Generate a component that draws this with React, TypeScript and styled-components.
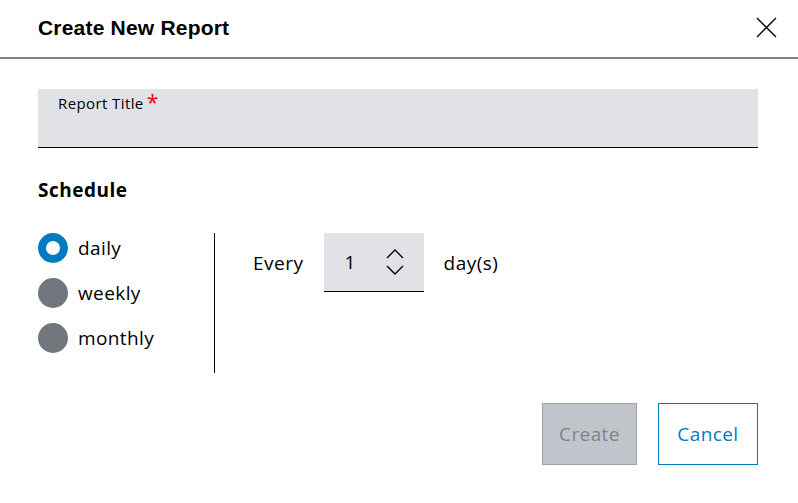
import React, { useState } from "react";
import styled, { createGlobalStyle } from "styled-components";

const GlobalStyle = createGlobalStyle`
  html, body {
    margin: 0;
    padding: 0;
    background: #ffffff;
  }
  body {
    font-family: "Open Sans", "Noto Sans", sans-serif;
    color: #000000;
  }
`;

const Dialog = styled.div`
  width: 798px;
  height: 503px;
  display: flex;
  flex-direction: column;
  box-sizing: border-box;
`;

const Header = styled.div`
  height: 55px;
  display: flex;
  align-items: center;
  justify-content: space-between;
  padding: 0 20px 2px 38px;
  border-bottom: 2px solid #7d8389;
`;

const Title = styled.h1`
  margin: 0;
  font-family: "Liberation Sans", Arial, sans-serif;
  font-size: 21px;
  font-weight: 700;
  letter-spacing: 0.2px;
`;

const CloseButton = styled.button`
  width: 24px;
  height: 24px;
  padding: 0;
  border: none;
  background: none;
  display: flex;
  align-items: center;
  justify-content: center;
`;

const Body = styled.div`
  display: flex;
  flex-direction: column;
  padding: 30px 40px 0 38px;
`;

const Field = styled.div`
  height: 59px;
  background: #e0e2e5;
  border-bottom: 1px solid #000000;
  padding: 4px 20px 0;
  box-sizing: border-box;
  font-size: 15px;
  letter-spacing: 0.4px;
`;

const Required = styled.span`
  color: #ed0007;
  font-size: 21px;
  line-height: 0;
  margin-left: 3px;
  position: relative;
  top: 1px;
`;

const SectionTitle = styled.h2`
  margin: 29px 0 0;
  font-size: 19px;
  font-weight: 700;
  letter-spacing: 0.5px;
`;

const Schedule = styled.div`
  display: flex;
  margin-top: 30px;
`;

const RadioList = styled.div`
  width: 176px;
  display: flex;
  flex-direction: column;
  gap: 15px;
`;

const RadioRow = styled.label`
  display: flex;
  align-items: center;
  gap: 10px;
  height: 30px;
  font-size: 19px;
  letter-spacing: 0.4px;
  cursor: pointer;
`;

const RadioDot = styled.span<{ $checked: boolean }>`
  width: 30px;
  height: 30px;
  border-radius: 50%;
  box-sizing: border-box;
  background: ${(p) => (p.$checked ? "#ffffff" : "#71767c")};
  border: ${(p) => (p.$checked ? "8.5px solid #007bc0" : "none")};
`;

const Divider = styled.div`
  width: 1px;
  height: 140px;
  background: #000000;
`;

const Interval = styled.div`
  display: flex;
  align-items: flex-start;
  padding-left: 38px;
  font-size: 19px;
  letter-spacing: 0.5px;
`;

const IntervalText = styled.span`
  height: 59px;
  display: flex;
  align-items: center;
`;

const NumberBox = styled.div`
  width: 100px;
  height: 59px;
  margin: 0 20px;
  background: #e0e2e5;
  border-bottom: 1px solid #000000;
  box-sizing: border-box;
  display: flex;
  align-items: center;
  justify-content: space-between;
  padding: 0 19px 0 21px;
`;

const Footer = styled.div`
  display: flex;
  justify-content: flex-end;
  gap: 21px;
  padding: 30px 40px 0 0;
`;

const Button = styled.button<{ $primary?: boolean }>`
  height: 62px;
  padding: 0 ${(p) => (p.$primary ? "16px" : "18.5px")};
  font-family: "Open Sans", sans-serif;
  font-size: 19px;
  letter-spacing: 0.4px;
  box-sizing: border-box;
  background: ${(p) => (p.$primary ? "#c1c5cb" : "#ffffff")};
  color: ${(p) => (p.$primary ? "#7d8389" : "#007bc0")};
  border: 1px solid ${(p) => (p.$primary ? "#9da2a8" : "#007bc0")};
`;

const options = ["daily", "weekly", "monthly"];

export default function App() {
  const [selected, setSelected] = useState("daily");
  return (
    <Dialog>
      <GlobalStyle />
      <Header>
        <Title>Create New Report</Title>
        <CloseButton aria-label="Close">
          <svg width="21" height="21" viewBox="0 0 21 21">
            <path d="M1 1L20 20M20 1L1 20" stroke="#000" strokeWidth="1.4" fill="none" />
          </svg>
        </CloseButton>
      </Header>
      <Body>
        <Field>
          Report Title<Required>*</Required>
        </Field>
        <SectionTitle>Schedule</SectionTitle>
        <Schedule>
          <RadioList>
            {options.map((o) => (
              <RadioRow key={o} onClick={() => setSelected(o)}>
                <RadioDot $checked={selected === o} />
                {o}
              </RadioRow>
            ))}
          </RadioList>
          <Divider />
          <Interval>
            <IntervalText>Every</IntervalText>
            <NumberBox>
              <span>1</span>
              <svg width="20" height="28" viewBox="0 0 20 28">
                <path d="M2 10L10 2L18 10M2 18L10 26L18 18" stroke="#000" strokeWidth="1.4" fill="none" />
              </svg>
            </NumberBox>
            <IntervalText>day(s)</IntervalText>
          </Interval>
        </Schedule>
      </Body>
      <Footer>
        <Button $primary>Create</Button>
        <Button>Cancel</Button>
      </Footer>
    </Dialog>
  );
}
